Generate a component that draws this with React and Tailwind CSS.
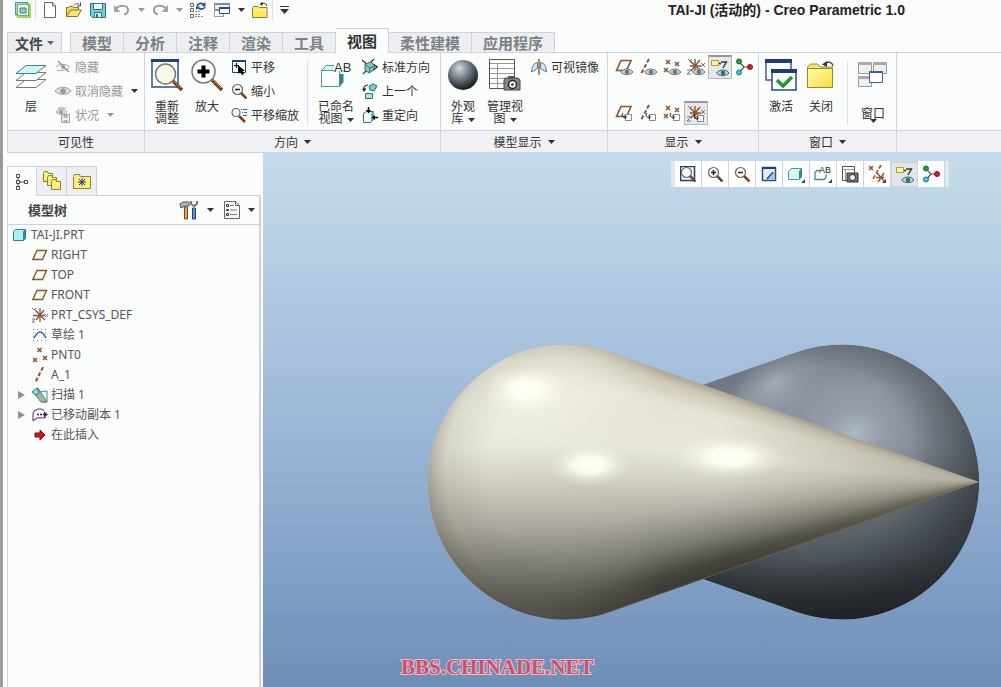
import clsx from 'clsx';

const BROWN = '#8a5530';

function Svg({ w = 16, h = 16, className, children }) {
  return (
    <svg
      width={w}
      height={h}
      viewBox={`0 0 ${w} ${h}`}
      fill="none"
      aria-hidden="true"
      className={clsx('shrink-0', className)}
    >
      {children}
    </svg>
  );
}

function Arrow({ className = 'text-[#333]' }) {
  return (
    <Svg w={7} h={4} className={className}>
      <path d="M0 0h7L3.5 4z" fill="currentColor" />
    </Svg>
  );
}

/* ---------- quick access icons ---------- */

const LogoIcon = () => (
  <Svg>
    <path d="M0 0h13l3 3v13H3l-3-3z" fill="#a4cf6a" />
    <path d="M.5 .5h12v12H.5z" fill="#a9cfe4" stroke="#4f93b8" />
    <path d="M2.500 2.500h11v11h-11z" fill="#eef6d6" stroke="#7fae5e" />
    <path d="M5 6h6v5H5z" fill="#8fc4dc" stroke="#3d7f9c" />
  </Svg>
);

const NewIcon = () => (
  <Svg>
    <path d="M2.500 .5h8l3 3.500v11.500h-11z" fill="#fff" stroke="#666" />
    <path d="M10.500 .5v3.500h3" stroke="#666" />
  </Svg>
);

const OpenIcon = () => (
  <Svg>
    <path d="M.5 14.500V5.500h2l1-1h3l1 1h5v3" fill="#f5d860" stroke="#8a7420" />
    <path d="M.5 14.500l4-6.500h11l-4 6.500z" fill="#fbe474" stroke="#8a7420" />
    <path d="M8 3.500c2-2.500 4-2.500 5.500-.5M14.500 .5v3.500h-3.500" stroke="#444" />
  </Svg>
);

const SaveIcon = () => (
  <Svg>
    <path d="M.5 1.500h15v14h-13l-2-2z" fill="#6fd0dc" stroke="#2f7784" />
    <path d="M3.500 1.500h9v6h-9z" fill="#f7fbfb" stroke="#2f7784" />
    <path d="M4.500 10.500h7v5h-7z" fill="#e4eef0" stroke="#2f7784" />
    <path d="M6 12h2v3H6z" fill="#2f7784" />
  </Svg>
);

const UndoIcon = () => (
  <Svg>
    <path d="M2 6.500c4-4 12-3.500 12 1.500 0 2.500-2 4-4 4.500" stroke="#9a9a9a" strokeWidth="2" />
    <path d="M0 3v7h6.500z" fill="#a4a4a4" />
  </Svg>
);

const RedoIcon = () => (
  <Svg>
    <path d="M14 6.500c-4-4-12-3.500-12 1.500 0 2.500 2 4 4 4.500" stroke="#9a9a9a" strokeWidth="2" />
    <path d="M16 3v7H9.500z" fill="#a4a4a4" />
  </Svg>
);

const RegenIcon = () => (
  <Svg>
    <path d="M.5 1.500h3v3h-3zM.5 6.500h3v3h-3zM.5 12.500h3v3h-3z" stroke="#666" />
    <path d="M5 9.500h6M5 14.500h9M5 12.500h5" stroke="#8a8a8a" strokeDasharray="2 1" />
    <path d="M7 4c1-3 5-3.500 7-1M15 4.500c-1 3-5 3.500-7 1" stroke="#1d4d8e" strokeWidth="1.600" />
    <path d="M15.500 0v4h-4zM6 8V4.500h4z" fill="#1d4d8e" />
  </Svg>
);

const WindowsIcon = () => (
  <Svg>
    <path d="M.5 1.500h15v6h-15z" fill="#eee" stroke="#888" />
    <path d="M0 1h16v2H0z" fill="#888" />
    <path d="M.5 8.500h9v6h-9z" fill="#fff" stroke="#999" />
    <path d="M5.500 5.500h10v6h-10z" fill="#fff" stroke="#274f8e" />
    <path d="M5 5h11v2H5z" fill="#274f8e" />
  </Svg>
);

const CloseFolderIcon = () => (
  <Svg>
    <path d="M.5 15.500v-10l1-1h5l1 1h7.500v10z" fill="#ffe95e" stroke="#8f8122" />
    <path d="M1 8h14" stroke="#fff6b0" />
    <path d="M14.500 4c0-3-3-3.500-5-2" stroke="#222" />
    <path d="M10.500 0v4L7.500 2z" fill="#222" />
  </Svg>
);

/* ---------- ribbon: large icons ---------- */

const LayersIcon = () => (
  <Svg w={32} h={32}>
    <path d="M11 20.500h20l-10 8H1z" fill="#fff" stroke="#777" />
    <path d="M11 13.500h20l-10 8H1z" fill="#fff" stroke="#777" />
    <path d="M11 6.500h20l-10 8H1z" fill="#c8fbfb" stroke="#557a80" />
  </Svg>
);

const RefitIcon = () => (
  <Svg w={32} h={32}>
    <path d="M1 1h26v27H1z" fill="#fff" stroke="#2d5497" strokeWidth="1.500" />
    <path d="M0 0h28v3H0z" fill="#1f3f85" />
    <path d="M22 22l9 9" stroke="#77411c" strokeWidth="3.500" />
    <path d="M22 21l8 8" stroke="#c58a56" strokeWidth="1" />
    <circle cx="14.500" cy="15" r="10" fill="#f8f8ea" stroke="#777" strokeWidth="1.500" />
  </Svg>
);

const ZoomInBigIcon = () => (
  <Svg w={32} h={32}>
    <path d="M21 21l10 10" stroke="#77411c" strokeWidth="3.500" />
    <path d="M21 20l9 9" stroke="#c58a56" />
    <circle cx="12.500" cy="12.500" r="11.500" fill="#fbfbf8" stroke="#777" strokeWidth="1.500" />
    <path d="M12.500 6.500v12M6.500 12.500h12" stroke="#000" strokeWidth="4" />
  </Svg>
);

const NamedViewsIcon = () => (
  <Svg w={32} h={32}>
    <path d="M1.500 11.500l5-5h10v5z" fill="#c9f7f7" />
    <path d="M1.500 11.500l5-5h8" stroke="#4e9a9a" />
    <path d="M1.500 11.500h18v16h-18z" fill="#fff" stroke="#4e9a9a" />
    <path d="M19.500 14l4-2v11l-4 5z" fill="#1f8a8a" />
    <path d="M14 3h18v12H20v-3h-6z" fill="#fbfcfd" />
    <text x="14" y="13" fontSize="13" fill="#333" fontFamily="Liberation Sans, sans-serif">AB</text>
  </Svg>
);

const SphereIcon = () => (
  <Svg w={32} h={32}>
    <defs>
      <radialGradient id="ball" cx=".38" cy=".28" r=".75">
        <stop offset="0" stopColor="#d3dbe2" />
        <stop offset=".35" stopColor="#87919a" />
        <stop offset=".75" stopColor="#3c434a" />
        <stop offset="1" stopColor="#14181b" />
      </radialGradient>
    </defs>
    <circle cx="16" cy="16" r="15" fill="url(#ball)" />
  </Svg>
);

const ManageViewsIcon = () => (
  <Svg w={32} h={32}>
    <path d="M.5 .5h25v29H.5z" fill="#fff" stroke="#555" />
    <path d="M1 4.500h24M1 9.500h24M1 14.500h24M1 19.500h24M1 24.500h24M8.500 4v25" stroke="#999" />
    <path d="M16 19h13l2 2v10H15V21z" fill="#8b8778" stroke="#444" />
    <path d="M19 17h6v3h-6z" fill="#555" />
    <circle cx="23.500" cy="25.500" r="4" fill="#fff" stroke="#222" strokeWidth="1.500" />
    <circle cx="23.500" cy="25.500" r="1.500" fill="#555" />
  </Svg>
);

const ActivateIcon = () => (
  <Svg w={32} h={32}>
    <path d="M1 1h25v20H1z" fill="#fff" stroke="#3a5fa0" strokeWidth="1.500" />
    <path d="M0 0h27v4H0z" fill="#1f3b80" />
    <path d="M7 12h24v19H7z" fill="#fff" stroke="#2a4a86" strokeWidth="1.500" />
    <path d="M6 10h26v4H6z" fill="#1f3b80" />
    <path d="M12 21l6 6 9-9" stroke="#1c9a2c" strokeWidth="3.500" />
  </Svg>
);

const CloseBigIcon = () => (
  <Svg w={32} h={32}>
    <defs>
      <linearGradient id="folder" x1="0" y1="0" x2="1" y2="1">
        <stop offset="0" stopColor="#fffbb0" />
        <stop offset="1" stopColor="#f6e03a" />
      </linearGradient>
    </defs>
    <path d="M2.500 10V8l3-3h7l3 3h12v2" fill="#f1e27a" stroke="#99892b" />
    <path d="M2.500 9.500h25v19h-25z" fill="url(#folder)" stroke="#99892b" />
    <path d="M28 7c-1-4-4-4.500-7-3" stroke="#333" strokeWidth="1.200" />
    <path d="M22 2v6l-5-2.500z" fill="#333" />
  </Svg>
);

const WindowMenuIcon = () => (
  <Svg w={32} h={32}>
    <path d="M1.500 3.500h13v11h-13zM16.500 3.500h13v11h-13zM1.500 17.500h13v10h-13z" fill="#f0f0ea" stroke="#999" />
    <path d="M1 3h14v3H1zM16 3h14v3H16zM1 17h14v3H1z" fill="#aaa" />
    <path d="M12.500 12.500h13v11h-13z" fill="#fff" stroke="#3562a6" />
    <path d="M12 12h14v2H12z" fill="#3562a6" />
  </Svg>
);

/* ---------- ribbon: small icons ---------- */

const EyeShape = ({ color = '#999' }) => (
  <>
    <path d="M0 8c4-5 12-5 16 0-4 4.500-12 4.500-16 0z" fill="#e2e2e2" stroke={color} />
    <circle cx="8" cy="8" r="2.800" fill={color} />
  </>
);

const HideIcon = () => (
  <Svg>
    <path d="M1 8c3-3 9-4 14 0M2 11c3 1 8 1 12-2" stroke="#a4a4a4" />
    <circle cx="8" cy="8" r="2" fill="#a4a4a4" />
    <path d="M3 2l11 11" stroke="#909090" strokeWidth="1.300" />
  </Svg>
);

const UnhideIcon = () => (
  <Svg>
    <EyeShape />
  </Svg>
);

const StatusIcon = () => (
  <Svg>
    <path d="M1 5c3-4 8-4 11 0-3 3-8 3-11 0zM3 1h8" stroke="#a4a4a4" fill="#ddd" />
    <circle cx="6" cy="5" r="2" fill="#999" />
    <path d="M6.500 7.500h8v8h-8z" fill="#ececec" stroke="#a0a0a0" />
    <path d="M8.500 8h4v3h-4zM8.500 13h4v2.500h-4z" fill="#b5b5b5" />
  </Svg>
);

const PanIcon = () => (
  <Svg>
    <path d="M1.500 1.500h13v12h-13z" fill="#fff" stroke="#1f3f7a" />
    <path d="M1 1h14v2H1z" fill="#1f3f7a" />
    <path d="M3 6.500h5M5.500 4v5" stroke="#000" strokeWidth="1.200" />
    <path d="M7 6v9l2-2 2 3 2-1-1.500-3H14z" fill="#000" />
  </Svg>
);

function Magnifier({ sign, framed }) {
  return (
    <Svg>
      {framed && <path d="M.5 .5h14v14H.5z" fill="#fff" stroke="#1f3f7a" strokeWidth="1.500" />}
      <path d="M10 10l5.500 5.500" stroke="#77411c" strokeWidth="2.500" />
      <circle cx="6.500" cy="6.500" r="5" fill="#fcfcf8" stroke="#666" strokeWidth="1.200" />
      {sign && <path d="M4 6.500h5" stroke="#222" strokeWidth="1.500" />}
      {sign === '+' && <path d="M6.500 4v5" stroke="#222" strokeWidth="1.500" />}
    </Svg>
  );
}

const PanZoomIcon = () => (
  <Svg>
    <path d="M8 9l6 6" stroke="#77411c" strokeWidth="2.500" />
    <circle cx="5" cy="5.500" r="4" fill="#fcfcf8" stroke="#666" strokeWidth="1.200" />
    <path d="M10 2.500h1M12 2.500h4M11 5.500h1M13 5.500h3M12 8.500h4" stroke="#3a5fa0" strokeWidth="1.200" />
  </Svg>
);

const StdOrientIcon = () => (
  <Svg>
    <path d="M3 5l6-2 4 4-1 4-5 3-4-3z" fill="#79c9c9" stroke="#2b7373" />
    <path d="M3 5l5 4 5-2M8 9l-1 5" stroke="#2b7373" />
    <path d="M0 1l4 3.500M1 15l3-3M9 3l3-3M11 5l4.500 3-4.500 3" stroke="#333" strokeWidth="1.200" />
  </Svg>
);

const PreviousIcon = () => (
  <Svg>
    <path d="M7 3l4-2 4 2-3 5-4-1z" fill="#74cccc" stroke="#2b7373" />
    <path d="M3.500 10.500h7v5h-7z" fill="#a8e6e6" stroke="#2b7373" />
    <path d="M6 2c-3 0-5 2-4 5" stroke="#222" strokeWidth="1.200" />
    <path d="M0 5.500h4.500L2 9z" fill="#222" />
  </Svg>
);

const ReorientIcon = () => (
  <Svg>
    <path d="M1.500 6.500l3-2h7v8l-3 3h-7z" fill="#fff" stroke="#2b7373" />
    <path d="M9 6l3-2v8l-3 3z" fill="#5bb5b5" />
    <path d="M6.500 0v4M16 10.500h-4" stroke="#000" strokeWidth="1.500" />
    <path d="M4 3h5L6.500 6.500zM13 8v5l-3.500-2.500z" fill="#000" />
  </Svg>
);

const MirrorIcon = () => (
  <Svg>
    <path d="M6.500 3.500C3 4 1 7 .5 13l6-3.500zM9.500 3.500c4 .5 5.500 3.500 6 9.500l-6-3.500z" fill="#d5e5f2" stroke="#4a7aa5" />
    <path d="M8 0v16" stroke="#b58a5c" strokeWidth="2" />
  </Svg>
);

const EyeBadge = ({ color = '#6a777c' }) => (
  <>
    <path d="M5.500 14c3-4 10-4 12.500 0-2.500 3.500-9.500 3.500-12.500 0z" fill="#c3d2d6" stroke={color} />
    <circle cx="12" cy="14" r="2.200" fill={color} />
  </>
);

const TagBadge = () => (
  <>
    <path d="M10.500 10.500h6v6h-6z" fill="#fff" stroke="#888" />
    <path d="M8 9c-2 3 0 5 3 4M9.500 11l2 2-2 2" stroke="#222" />
  </>
);

const Cross = ({ x, y, s = 2 }) => (
  <path d={`M${x - s} ${y - s}l${2 * s} ${2 * s}M${x + s} ${y - s}l${-2 * s} ${2 * s}`} stroke={BROWN} strokeWidth="1.500" />
);

const PlaneShape = () => <path d="M6 2.500h10l-4.500 10H1.500z" stroke={BROWN} strokeWidth="1.600" />;
const AxisShape = () => <path d="M10 1L2 16" stroke={BROWN} strokeWidth="2" strokeDasharray="4 2" />;
const PointsShape = () => (
  <>
    <Cross x={5} y={4} />
    <Cross x={14} y={6} />
    <Cross x={3} y={12} />
  </>
);
const CsysShape = () => (
  <>
    <path d="M8 1v13M3 8h11M3 3l10 9M13 2L4 13" stroke={BROWN} strokeWidth="1.400" />
    <path d="M1 1l2 2 2-2M0 12h4l-4 4h4M14 5l4 4M18 5l-4 4" stroke="#777" />
  </>
);

const displayShapes = {
  plane: PlaneShape,
  axis: AxisShape,
  points: PointsShape,
  csys: CsysShape,
};

function DatumIcon({ kind, badge }) {
  const Shape = displayShapes[kind];
  return (
    <Svg w={18} h={18}>
      <Shape />
      {badge === 'eye' ? <EyeBadge /> : <TagBadge />}
    </Svg>
  );
}

const AnnotationIcon = () => (
  <Svg w={18} h={18}>
    <path d="M.5 1.500h7v5h-7z" fill="#fff39a" stroke="#b39b3c" />
    <path d="M8 4.500h2M10 3h5.500l-3.500 6" stroke="#333" strokeWidth="1.400" />
    <EyeBadge color="#2c6f72" />
  </Svg>
);

const SpinCenterIcon = () => (
  <Svg w={18} h={18}>
    <path d="M9 9L4 4M9 9l-5 6M9 9h6" stroke="#555" strokeWidth="1.200" />
    <circle cx="4" cy="3.500" r="2.500" fill="#22a13a" stroke="#146a24" />
    <circle cx="4" cy="14.500" r="2.500" fill="#35c8d8" stroke="#177a88" />
    <circle cx="15" cy="9" r="2.500" fill="#d2202c" stroke="#86101a" />
  </Svg>
);

/* ---------- graphics toolbar icons ---------- */

const RepaintIcon = () => (
  <Svg>
    <path d="M1.500 1.500h13v13h-13z" fill="#e6effa" stroke="#274f8e" strokeWidth="1.500" />
    <path d="M1 1h14v2H1z" fill="#1f3f7a" />
    <path d="M14 14V5L5 14z" fill="#a5bfe4" />
    <path d="M12 6l-6 7" stroke="#274f8e" strokeWidth="1.500" />
  </Svg>
);

const CornerMark = () => <path d="M18 14v4h-4z" fill="#444" />;

const DisplayStyleIcon = () => (
  <Svg w={18} h={18}>
    <path d="M1.500 6.500l3-3h10v8l-3 3h-10z" fill="#d6fafa" stroke="#4c9494" />
    <path d="M12 6l3-3v9l-3 3z" fill="#2b8f8f" />
    <CornerMark />
  </Svg>
);

const SavedViewsIcon = () => (
  <Svg w={18} h={18}>
    <path d="M6 5.500H3l-2 2v7h9l2-2v-3" stroke="#3f8f8f" strokeWidth="1.300" />
    <text x="5" y="8" fontSize="9" fill="#222" fontFamily="Liberation Sans, sans-serif">AB</text>
    <CornerMark />
  </Svg>
);

const ViewManagerIcon = () => (
  <Svg w={18} h={18}>
    <path d="M1.500 1.500h12v14h-12z" fill="#fff" stroke="#555" />
    <path d="M2 4.500h11M4.500 4v11" stroke="#999" />
    <path d="M6 8h11v9H6z" fill="#777" stroke="#333" />
    <circle cx="11.500" cy="12.500" r="3" fill="#fff" stroke="#222" />
  </Svg>
);

const DatumFilterIcon = () => (
  <Svg w={18} h={18}>
    <Cross x={3} y={3} />
    <path d="M13 0L4 16" stroke={BROWN} strokeWidth="1.600" strokeDasharray="4 2" />
    <path d="M16 8l-6 9M9 8l8 9M8 12.500h8" stroke={BROWN} strokeWidth="1.400" />
    <CornerMark />
  </Svg>
);

/* ---------- navigator icons ---------- */

const TreeTabIcon = () => (
  <Svg>
    <path d="M2.500 .5h3v3h-3zM2.500 6.500h3v3h-3zM10.500 6.500h3v3h-3zM2.500 12.500h3v3h-3zM4 4v2M4 10v2M6 8h4" stroke="#444" />
  </Svg>
);

const FoldersIcon = () => (
  <Svg w={20} h={20}>
    {[0, 4, 8].map((d) => (
      <path
        key={d}
        d={`M${d + 1.5} ${d + 2.5}l1-2h3l1 2h4v8h-9z`}
        fill="#f7ee86"
        stroke="#8d8332"
      />
    ))}
  </Svg>
);

const FavoritesIcon = () => (
  <Svg w={18} h={16}>
    <path d="M.5 15.500V3.500l1-2h5l1 2h10v12z" fill="#fbf07c" stroke="#8d8332" />
    <path d="M9 5v8M5 9h8M6 6l6 6M12 6l-6 6" stroke="#1f2f7a" />
  </Svg>
);

const ToolsIcon = () => (
  <Svg w={20} h={20}>
    <path d="M1 4l3-2h6v4H6L2 8z" fill="#aab4ba" stroke="#555" />
    <path d="M5.500 7h3v12h-3z" fill="#e9a04a" stroke="#8a4513" />
    <path d="M12 1v3l3 2 3-2V1" stroke="#777" strokeWidth="2" />
    <path d="M13.500 8h3v11h-3z" fill="#5b90dc" stroke="#1c4688" />
  </Svg>
);

const SettingsListIcon = () => (
  <Svg w={16} h={20}>
    <path d="M.5 1.500h11l4 4v13H.5z" fill="#fdfdf8" stroke="#666" />
    <path d="M11.500 1.500v4h4" stroke="#666" />
    <path d="M6 5.500h4M6 10h7M6 14.500h7" stroke="#777" />
    <path d="M2.500 4.500h2v2h-2zM2.500 9.500h2v1h-2zM2.500 13.500h2v2h-2z" stroke="#333" />
  </Svg>
);

const PartIcon = () => (
  <Svg>
    <path d="M1.500 4.500l2-2h10v9l-2 2h-10z" fill="#a6f4f7" stroke="#3a7a80" />
    <path d="M11 4.500l2-2v9l-2 2z" fill="#2e8c94" />
  </Svg>
);

const PlaneIcon = () => (
  <Svg>
    <path d="M5 3.500h9.500l-4 9H.8z" fill="#fffaf4" stroke={BROWN} strokeWidth="1.400" />
  </Svg>
);

const CsysIcon = () => (
  <Svg>
    <path d="M8 1v14M1 8.500h12M3 3l10 10M12 3L4 13" stroke={BROWN} strokeWidth="1.300" />
    <path d="M0 1l2 2 2-2M0 12h3l-3 3h3M13 7l3 3M16 7l-3 3" stroke="#777" />
  </Svg>
);

const SketchIcon = () => (
  <Svg>
    <path d="M1 2.500h14M1 13.500h14M1 6h2M13 6h2M1 10h2M13 10h2" stroke="#4a86c5" strokeDasharray="1 3" />
    <path d="M2 11c2-3 3-6 6-6s4 3 6 6" stroke="#2b6cb0" strokeWidth="1.500" />
  </Svg>
);

const PointIcon = () => (
  <Svg>
    <Cross x={7.5} y={3} />
    <Cross x={3} y={13} />
    <Cross x={13} y={11} />
  </Svg>
);

const AxisIcon = () => (
  <Svg>
    <path d="M11 0L3 16" stroke={BROWN} strokeWidth="2" strokeDasharray="4 2" />
  </Svg>
);

const SweepIcon = () => (
  <Svg>
    <path d="M7 5l8-1v11H9z" fill="#eef8f4" stroke="#4a8f86" />
    <path d="M1 5l5-4 9 14H9z" fill="#9fb6b3" stroke="#5a7f7b" />
    <path d="M0 5l5-4 2 5-3 2z" fill="#7fe4e4" stroke="#2f8080" />
  </Svg>
);

const MovedCopyIcon = () => (
  <Svg>
    <path d="M1 14V7c1-5 9-7 11-3M1 14l4-3c3-1 7 1 9-1" stroke="#8650a8" strokeWidth="1.300" />
    <path d="M5 7.500h7" stroke="#222" strokeWidth="1.500" strokeDasharray="2 1" />
    <path d="M12 4.500l4 3-4 3z" fill="#40165c" />
  </Svg>
);

const InsertIcon = () => (
  <Svg>
    <path d="M3 6h5V3l5 5-5 5v-3H3z" fill="#d01414" stroke="#8a0d0d" />
  </Svg>
);

/* ---------- ribbon building blocks ---------- */

function Group({ label, menu, className, children }) {
  return (
    <section className={clsx('flex shrink-0 flex-col border-r border-[#d3d6dc]', className)}>
      <div className="flex h-[77px] items-start">{children}</div>
      <div className="flex h-[22px] items-center justify-center gap-1.5 border-t border-[#cfd2d8] bg-[#eff1f5] leading-4">
        <span>{label}</span>
        {menu && <Arrow />}
      </div>
    </section>
  );
}

function BigButton({ icon, label, labelWidth, arrow, className }) {
  return (
    <button className={clsx('flex shrink-0 flex-col items-center gap-[9px] pt-1.5 leading-3', className)}>
      {icon}
      <span className={labelWidth}>
        {label}
        {arrow && <Arrow className="ml-1 inline-block align-middle text-[#333]" />}
      </span>
    </button>
  );
}

function SmallButton({ icon, label, disabled, arrow }) {
  return (
    <button
      disabled={disabled}
      className={clsx('flex h-6 items-center gap-1 whitespace-nowrap', disabled && 'text-[#999]')}
    >
      {icon}
      {label}
      {arrow && <Arrow className={clsx('ml-1', arrow)} />}
    </button>
  );
}

const Divider = ({ className }) => <div className={clsx('w-px shrink-0 bg-[#dcdee2]', className)} />;

const tabs = ['模型', '分析', '注释', '渲染', '工具', '视图', '柔性建模', '应用程序'];

function QuickAccess() {
  const cell = 'flex h-5 w-6 items-center justify-center';
  const drop = 'flex h-5 w-3.5 items-center justify-center';
  return (
    <header className="flex h-7 items-start pl-2">
      <div className="flex items-center">
        <button aria-label="Creo" className={cell}><LogoIcon /></button>
        <Divider className="mr-0.5 h-5" />
        <button aria-label="新建" className={cell}><NewIcon /></button>
        <button aria-label="打开" className={cell}><OpenIcon /></button>
        <button aria-label="保存" className={cell}><SaveIcon /></button>
        <button aria-label="撤消" className={cell}><UndoIcon /></button>
        <button aria-label="撤消列表" className={drop}><Arrow className="text-[#999]" /></button>
        <button aria-label="重做" className={cell}><RedoIcon /></button>
        <button aria-label="重做列表" className={drop}><Arrow className="text-[#999]" /></button>
        <button aria-label="重新生成" className={cell}><RegenIcon /></button>
        <button aria-label="窗口" className={cell}><WindowsIcon /></button>
        <button aria-label="窗口列表" className={drop}><Arrow /></button>
        <button aria-label="关闭" className={cell}><CloseFolderIcon /></button>
        <Divider className="mr-1 h-5" />
        <button aria-label="自定义" className={drop}>
          <Svg w={9} h={8}>
            <path d="M0 .5h9" stroke="#333" />
            <path d="M0 3h9L4.500 8z" fill="#333" />
          </Svg>
        </button>
      </div>
      <h1 className="flex-1 pr-24 text-right font-['Liberation_Sans','Noto_Sans_CJK_SC',sans-serif] text-sm leading-5 font-bold text-[#222]">
        TAI-JI (活动的) - Creo Parametric 1.0
      </h1>
    </header>
  );
}

function TabBar() {
  return (
    <nav className="flex h-6 items-end pl-1 text-[15px] leading-5 font-bold text-[#7c8087]">
      <button className="flex h-5 w-[55px] items-center justify-center gap-1 border border-b-0 border-[#cfd2d8] bg-[#eceef2] text-sm text-[#444]">
        文件
        <Arrow className="text-[#666]" />
      </button>
      <div className="ml-2 flex items-end">
        {tabs.map((tab) => (
          <button
            key={tab}
            className={clsx(
              'border-t border-r border-[#cfd2d8] px-[11px] first:border-l',
              tab === '视图' ? 'relative z-10 -mb-px h-[25px] bg-[#fbfcfc] text-[#333]' : 'h-5 bg-[#eceef2]'
            )}
          >
            {tab}
          </button>
        ))}
      </div>
    </nav>
  );
}

function IconToggle({ label, active, children }) {
  return (
    <button
      aria-label={label}
      aria-pressed={!!active}
      className={clsx(
        'flex size-6 items-center justify-center',
        active && 'border border-t-2 border-[#b4b7bb] border-t-[#94979b] bg-[#e6e8ea]'
      )}
    >
      {children}
    </button>
  );
}

function Ribbon() {
  return (
    <div className="ml-1 flex border-y border-l border-[#cfd2d8] text-[#333]">
      <Group label="可见性" className="w-[137px]">
        <BigButton className="w-[46px]" icon={<LayersIcon />} label="层" />
        <div className="flex flex-col pt-0.5 pl-px">
          <SmallButton disabled icon={<HideIcon />} label="隐藏" />
          <SmallButton disabled icon={<UnhideIcon />} label="取消隐藏" arrow="text-[#333]" />
          <SmallButton disabled icon={<StatusIcon />} label="状况" arrow="text-[#999]" />
        </div>
      </Group>

      <Group label="方向" menu className="w-[296px]">
        <BigButton className="ml-0.5 w-10" icon={<RefitIcon />} label="重新调整" labelWidth="w-6" />
        <BigButton className="w-10" icon={<ZoomInBigIcon />} label="放大" />
        <div className="flex flex-col pt-0.5 pl-1">
          <SmallButton icon={<PanIcon />} label="平移" />
          <SmallButton icon={<Magnifier sign="-" />} label="缩小" />
          <SmallButton icon={<PanZoomIcon />} label="平移缩放" />
        </div>
        <Divider className="mt-2 ml-2 h-16" />
        <BigButton className="ml-1.5 w-11" icon={<NamedViewsIcon />} label="已命名视图" labelWidth="w-10" arrow />
        <div className="flex flex-col pt-0.5 pl-1">
          <SmallButton icon={<StdOrientIcon />} label="标准方向" />
          <SmallButton icon={<PreviousIcon />} label="上一个" />
          <SmallButton icon={<ReorientIcon />} label="重定向" />
        </div>
      </Group>

      <Group label="模型显示" menu className="w-[167px]">
        <BigButton className="ml-0.5 w-10" icon={<SphereIcon />} label="外观库" labelWidth="w-7" arrow />
        <BigButton className="w-11" icon={<ManageViewsIcon />} label="管理视图" labelWidth="w-10" arrow />
        <div className="flex flex-col pt-0.5 pl-1">
          <SmallButton icon={<MirrorIcon />} label="可视镜像" />
        </div>
      </Group>

      <Group label="显示" menu className="w-[151px]">
        <div className="flex flex-col gap-[22px] pt-0.5 pl-1">
          <div className="flex">
            <IconToggle label="平面显示"><DatumIcon kind="plane" badge="eye" /></IconToggle>
            <IconToggle label="轴显示"><DatumIcon kind="axis" badge="eye" /></IconToggle>
            <IconToggle label="点显示"><DatumIcon kind="points" badge="eye" /></IconToggle>
            <IconToggle label="坐标系显示"><DatumIcon kind="csys" badge="eye" /></IconToggle>
            <IconToggle label="注释显示" active><AnnotationIcon /></IconToggle>
            <IconToggle label="旋转中心"><SpinCenterIcon /></IconToggle>
          </div>
          <div className="flex">
            <IconToggle label="平面标记显示"><DatumIcon kind="plane" badge="tag" /></IconToggle>
            <IconToggle label="轴标记显示"><DatumIcon kind="axis" badge="tag" /></IconToggle>
            <IconToggle label="点标记显示"><DatumIcon kind="points" badge="tag" /></IconToggle>
            <IconToggle label="坐标系标记显示" active><DatumIcon kind="csys" badge="tag" /></IconToggle>
          </div>
        </div>
      </Group>

      <Group label="窗口" menu className="w-[138px]">
        <BigButton className="ml-0.5 w-10" icon={<ActivateIcon />} label="激活" />
        <BigButton className="w-10" icon={<CloseBigIcon />} label="关闭" />
        <Divider className="mt-2 ml-1.5 h-16" />
        <button className="ml-1 flex w-[42px] flex-col items-center pt-1.5 leading-3">
          <WindowMenuIcon />
          <span className="mt-4">窗口</span>
          <Arrow />
        </button>
      </Group>

      <div className="flex flex-1 flex-col">
        <div className="h-[77px]" />
        <div className="h-[22px] border-t border-[#cfd2d8] bg-[#eff1f5]" />
      </div>
    </div>
  );
}

/* ---------- navigator ---------- */

const treeItems = [
  { icon: PlaneIcon, label: 'RIGHT' },
  { icon: PlaneIcon, label: 'TOP' },
  { icon: PlaneIcon, label: 'FRONT' },
  { icon: CsysIcon, label: 'PRT_CSYS_DEF' },
  { icon: SketchIcon, label: '草绘 1' },
  { icon: PointIcon, label: 'PNT0' },
  { icon: AxisIcon, label: 'A_1' },
  { icon: SweepIcon, label: '扫描 1', expandable: true },
  { icon: MovedCopyIcon, label: '已移动副本 1', expandable: true },
  { icon: InsertIcon, label: '在此插入' },
];

function Navigator() {
  const tab = 'flex h-[29px] w-[30px] items-center justify-center border-t border-r border-[#cfd2d8]';
  return (
    <aside className="ml-1 flex w-[256px] shrink-0 flex-col pt-[13px]">
      <div className="flex">
        <button aria-label="模型树" className={clsx(tab, 'relative z-10 -mb-px h-[30px] border-l bg-[#fbfcfc]')}><TreeTabIcon /></button>
        <button aria-label="文件夹浏览器" className={clsx(tab, 'bg-[#eceef2]')}><FoldersIcon /></button>
        <button aria-label="收藏夹" className={clsx(tab, 'bg-[#eceef2]')}><FavoritesIcon /></button>
      </div>
      <div className="mr-0.5 flex flex-1 flex-col border-t border-r-2 border-l border-[#cfd2d8]">
        <div className="flex h-[29px] items-center border-b border-[#cfd2d8] pr-1 pl-5">
          <h2 className="flex-1 text-[13px] font-bold text-[#444]">模型树</h2>
          <button aria-label="设置" className="flex items-center gap-2">
            <ToolsIcon />
            <Arrow />
          </button>
          <button aria-label="显示" className="ml-2.5 flex items-center gap-2">
            <SettingsListIcon />
            <Arrow />
          </button>
        </div>
        <div className="font-['Noto_Sans','Noto_Sans_CJK_SC',sans-serif] leading-5 text-[#555]">
          <div className="flex h-5 items-center gap-[3px] pl-1">
            <PartIcon />
            TAI-JI.PRT
          </div>
          <ul>
            {treeItems.map(({ icon: Icon, label, expandable }) => (
              <li key={label} className="flex h-5 items-center pl-[7px]">
                <span className="flex w-[17px] justify-center pr-1">
                  {expandable && (
                    <button aria-label={`展开 ${label}`}>
                      <Svg w={8} h={10}>
                        <path d="M0 1l7 4-7 4z" fill="#8f8f8f" />
                      </Svg>
                    </button>
                  )}
                </span>
                <Icon />
                <span className="ml-[3px]">{label}</span>
              </li>
            ))}
          </ul>
        </div>
      </div>
    </aside>
  );
}

/* ---------- model view ---------- */

const FRONT = 'M348 199.300A137.500 137.500 0 1 0 348 458.700L716 329z';
const REAR = 'M533 199.300A137.500 137.500 0 1 1 533 458.700L165 329z';
const TIP = [716, 329];

// shade of the cone from its upper edge (0) to its lower edge (1)
const coneStops = [
  [0, [176, 168, 150]],
  [0.04, [205, 200, 184]],
  [0.14, [229, 227, 211]],
  [0.36, [232, 231, 219]],
  [0.5, [210, 208, 197]],
  [0.64, [178, 176, 166]],
  [0.8, [124, 123, 115]],
  [0.93, [70, 70, 62]],
  [1, [60, 58, 50]],
];

function coneColor(t) {
  const i = Math.max(1, coneStops.findIndex(([at]) => at >= t));
  const [a, from] = coneStops[i - 1];
  const [b, to] = coneStops[i];
  const k = (t - a) / (b - a);
  return `rgb(${from.map((c, n) => Math.round(c + (to[n] - c) * k)).join(',')})`;
}

const SLICES = 90;
const slices = Array.from({ length: SLICES }, (_, i) => {
  const edge = (t) => TIP[1] + (t * 2 - 1) * 165;
  return {
    fill: coneColor(i / (SLICES - 1)),
    points: `${TIP} 248,${edge(i / SLICES)} 248,${edge(1)}`,
  };
});

function Model() {
  return (
    <svg viewBox="0 0 738 534" className="absolute inset-0 h-full w-full" aria-hidden="true">
      <defs>
        <clipPath id="front"><path d={FRONT} /></clipPath>
        <clipPath id="rear"><path d={REAR} /></clipPath>
        <linearGradient id="body" gradientUnits="userSpaceOnUse" x1="290" y1="191" x2="302" y2="467">
          <stop offset="0" stopColor="#dcd8c8" />
          <stop offset=".06" stopColor="#ebe9da" />
          <stop offset=".2" stopColor="#f1f0e4" />
          <stop offset=".36" stopColor="#eae9dd" />
          <stop offset=".5" stopColor="#cfcdc2" />
          <stop offset=".65" stopColor="#adaba1" />
          <stop offset=".8" stopColor="#7e7d74" />
          <stop offset=".92" stopColor="#5a5951" />
          <stop offset="1" stopColor="#4a4941" />
        </linearGradient>
        <radialGradient id="rim" gradientUnits="userSpaceOnUse" cx="318" cy="318" r="155">
          <stop offset=".6" stopColor="#5c594c" stopOpacity="0" />
          <stop offset=".88" stopColor="#5c594c" stopOpacity=".14" />
          <stop offset="1" stopColor="#5c594c" stopOpacity=".42" />
        </radialGradient>
        <linearGradient id="fade" gradientUnits="userSpaceOnUse" x1="270" y1="0" x2="400" y2="0">
          <stop offset="0" stopColor="#fff" />
          <stop offset="1" stopColor="#000" />
        </linearGradient>
        <mask id="bodyMask" maskUnits="userSpaceOnUse" x="0" y="0" width="738" height="534">
          <rect width="738" height="534" fill="url(#fade)" />
        </mask>
        <linearGradient id="point" gradientUnits="userSpaceOnUse" x1="460" y1="0" x2="716" y2="0">
          <stop offset="0" stopColor="#8c8676" stopOpacity="0" />
          <stop offset="1" stopColor="#8c8676" stopOpacity=".6" />
        </linearGradient>
        <linearGradient id="steel" gradientUnits="userSpaceOnUse" x1="560" y1="191" x2="580" y2="467">
          <stop offset="0" stopColor="#7b848d" />
          <stop offset=".18" stopColor="#8b949e" />
          <stop offset=".4" stopColor="#828b95" />
          <stop offset=".6" stopColor="#666d75" />
          <stop offset=".78" stopColor="#50565d" />
          <stop offset=".92" stopColor="#2e3033" />
          <stop offset="1" stopColor="#202122" />
        </linearGradient>
        <radialGradient id="steelRim" gradientUnits="userSpaceOnUse" cx="555" cy="305" r="164">
          <stop offset=".55" stopColor="#1f2429" stopOpacity="0" />
          <stop offset="1" stopColor="#1f2429" stopOpacity=".6" />
        </radialGradient>
        <radialGradient id="steelGlow">
          <stop offset="0" stopColor="#c0cad6" stopOpacity=".85" />
          <stop offset=".4" stopColor="#a8b2bd" stopOpacity=".45" />
          <stop offset="1" stopColor="#98a2ad" stopOpacity="0" />
        </radialGradient>
        <radialGradient id="glow">
          <stop offset="0" stopColor="#fffff8" />
          <stop offset=".35" stopColor="#fffff4" stopOpacity=".9" />
          <stop offset=".65" stopColor="#fffff0" stopOpacity=".35" />
          <stop offset="1" stopColor="#fffff0" stopOpacity="0" />
        </radialGradient>
        <filter id="soft" x="-10%" y="-10%" width="120%" height="120%">
          <feGaussianBlur stdDeviation="1" />
        </filter>
        <filter id="softer" x="-20%" y="-20%" width="140%" height="140%">
          <feGaussianBlur stdDeviation="3" />
        </filter>
      </defs>

      <g clipPath="url(#rear)">
        <path d={REAR} fill="url(#steel)" />
        <path d={REAR} fill="url(#steelRim)" />
        <ellipse cx="513" cy="230" rx="56" ry="36" fill="url(#steelGlow)" opacity=".6" transform="rotate(-30 513 230)" />
        <path d="M400 250l72-10c8-16 24-32 50-46l-30-4-100 40z" fill="#717a85" opacity=".8" filter="url(#softer)" />
        <ellipse cx="592" cy="280" rx="80" ry="62" fill="url(#steelGlow)" opacity=".85" />
      </g>

      <g clipPath="url(#front)">
        <path d={FRONT} fill={coneColor(0)} />
        <g filter="url(#soft)">
          {slices.map((slice) => (
            <polygon key={slice.points} points={slice.points} fill={slice.fill} />
          ))}
        </g>
        <path d={FRONT} fill="url(#point)" />
        <g mask="url(#bodyMask)">
          <path d={FRONT} fill="url(#body)" />
          <path d={FRONT} fill="url(#rim)" />
        </g>
        <ellipse cx="263" cy="236" rx="42" ry="24" fill="url(#glow)" />
        <ellipse cx="327" cy="312" rx="42" ry="21" fill="url(#glow)" />
        <ellipse cx="467" cy="304" rx="54" ry="22" fill="url(#glow)" />
      </g>
    </svg>
  );
}

const viewTools = [
  { label: '重新调整', icon: <Magnifier framed /> },
  { label: '放大', icon: <Magnifier sign="+" /> },
  { label: '缩小', icon: <Magnifier sign="-" /> },
  { label: '重画', icon: <RepaintIcon /> },
  { label: '显示样式', icon: <DisplayStyleIcon /> },
  { label: '已保存方向', icon: <SavedViewsIcon /> },
  { label: '视图管理器', icon: <ViewManagerIcon /> },
  { label: '基准显示过滤器', icon: <DatumFilterIcon /> },
  { label: '注释显示', icon: <AnnotationIcon />, active: true },
  { label: '旋转中心', icon: <SpinCenterIcon /> },
];

function Viewport() {
  return (
    <main className="relative flex-1 bg-linear-to-b from-[#c6dceb] via-[#9db8d8] to-[#6f8eb7]">
      <Model />
      <div className="absolute top-2 right-[52px] flex border-x-4 border-[#e3e8ec] bg-white">
        {viewTools.map(({ label, icon, active }) => (
          <button
            key={label}
            aria-label={label}
            className={clsx(
              'flex h-[26px] w-[27px] items-center justify-center border-r border-[#d0d4d8]',
              active && 'border border-t-2 border-[#a4a8ac] bg-[#e3e6e8]'
            )}
          >
            {icon}
          </button>
        ))}
      </div>
      <p className="absolute bottom-2 left-[138px] font-['Liberation_Serif',serif] text-[21px] leading-6 font-bold text-[#cf4f6c] [-webkit-text-stroke:2px_#dfc3d3] [paint-order:stroke_fill]">
        BBS.CHINADE.NET
      </p>
    </main>
  );
}

export default function App() {
  return (
    <div className="flex min-h-screen flex-col border-l-[3px] border-[#9b9b9b] bg-[#fbfcfc] font-['Noto_Sans_CJK_SC',sans-serif] text-xs">
      <QuickAccess />
      <TabBar />
      <Ribbon />
      <div className="flex flex-1">
        <Navigator />
        <Viewport />
      </div>
    </div>
  );
}
